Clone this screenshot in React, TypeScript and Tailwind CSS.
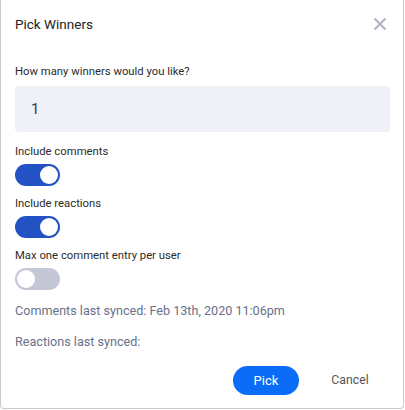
import React, { useState } from 'react';

function Toggle({ on, onChange }: { on: boolean; onChange: () => void }) {
  return (
    <button
      onClick={onChange}
      className={`relative flex h-[22px] w-[45px] items-center rounded-full px-[2px] ${
        on ? 'justify-end bg-[#2352c4]' : 'justify-start bg-[#c3c7d6]'
      }`}
    >
      <span className="block h-[18px] w-[18px] rounded-full bg-white" />
    </button>
  );
}

export default function App() {
  const [winners, setWinners] = useState('1');
  const [comments, setComments] = useState(true);
  const [reactions, setReactions] = useState(true);
  const [maxOne, setMaxOne] = useState(false);

  return (
    <div className="h-[410px] w-[405px] bg-white font-['Roboto','Liberation_Sans',sans-serif]">
      <div className="flex h-[409px] w-[404px] flex-col rounded-b-[4px] border-x border-b border-[#c9cace] px-[14px]">
        {/* Header */}
        <div className="mt-[14px] flex items-center justify-between">
          <h2 className="text-[13.5px] leading-5 text-[#222]">Pick Winners</h2>
          <button className="mr-[2px] text-[#b5b9c6]">
            <svg width="14" height="14" viewBox="0 0 14 14" fill="none" stroke="currentColor" strokeWidth="2.4">
              <path d="M1.5 1.5l11 11M12.5 1.5l-11 11" />
            </svg>
          </button>
        </div>

        <label className="mt-[30px] text-[11.3px] leading-4 text-[#2b2b2b]">How many winners would you like?</label>
        <input
          value={winners}
          onChange={(e) => setWinners(e.target.value)}
          className="mt-[6px] h-[46px] w-[375px] rounded-[4px] bg-[#f0f1f6] px-[16px] text-[15px] text-[#2c3a5c] outline-none"
        />

        <div className="mt-[12px] text-[11.3px] leading-4 text-[#2b2b2b]">Include comments</div>
        <div className="mt-[4px]">
          <Toggle on={comments} onChange={() => setComments(!comments)} />
        </div>

        <div className="mt-[10px] text-[11.3px] leading-4 text-[#2b2b2b]">Include reactions</div>
        <div className="mt-[4px]">
          <Toggle on={reactions} onChange={() => setReactions(!reactions)} />
        </div>

        <div className="mt-[10px] text-[11.3px] leading-4 text-[#2b2b2b]">Max one comment entry per user</div>
        <div className="mt-[4px]">
          <Toggle on={maxOne} onChange={() => setMaxOne(!maxOne)} />
        </div>

        <p className="mt-[13px] text-[12.6px] leading-4 text-[#68718a]">Comments last synced: Feb 13th, 2020 11:06pm</p>
        <p className="mt-[15px] text-[12.6px] leading-4 text-[#68718a]">Reactions last synced:</p>

        {/* Footer */}
        <div className="mt-[16px] flex items-center justify-end gap-[12px]">
          <button className="h-[29px] w-[66px] rounded-full bg-[#0b6cf7] text-[13px] text-white">Pick</button>
          <button className="h-[29px] w-[78px] text-[12.3px] text-[#555]">Cancel</button>
        </div>
      </div>
    </div>
  );
}
